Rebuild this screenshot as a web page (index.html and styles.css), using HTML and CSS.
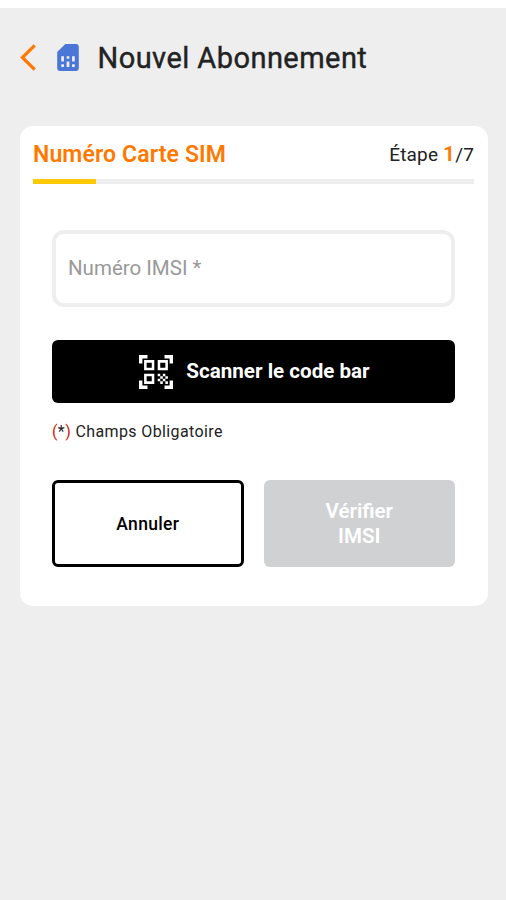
FILE: index.html
```html
<!DOCTYPE html>
<html lang="fr">
<head>
  <meta charset="UTF-8">
  <title>Nouvel Abonnement</title>
  <link rel="stylesheet" href="styles.css">
</head>
<body>
  <header class="topbar">
    <svg class="back" viewBox="0 0 16 28"><path d="M14.7 1.3 2.4 13.5l12.3 12.2"/></svg>
    <svg class="sim" viewBox="4 2 16 20"><path d="M20 4c0-1.1-.9-2-2-2h-8L4 8v12c0 1.1.9 2 2 2h12c1.1 0 2-.9 2-2V4zM9 19H7v-2h2v2zm8 0h-2v-2h2v2zm-8-4H7v-4h2v4zm4 4h-2v-4h2v4zm0-6h-2v-2h2v2zm4 2h-2v-4h2v4z"/></svg>
    <h1>Nouvel Abonnement</h1>
  </header>

  <main class="card">
    <div class="card-head">
      <h2>Numéro Carte SIM</h2>
      <span class="step">Étape <b>1</b>/7</span>
    </div>
    <div class="progress"><div class="progress-bar"></div></div>

    <form class="form">
      <input type="text" placeholder="Numéro IMSI *">
      <button type="button" class="btn btn-scan">
        <svg viewBox="2 2 20 20"><path d="M9.5 6.5v3h-3v-3h3M11 5H5v6h6V5zm-1.5 9.5v3h-3v-3h3M11 13H5v6h6v-6zm6.5-6.5v3h-3v-3h3M19 5h-6v6h6V5zm-6 8h1.5v1.5H13V13zm1.5 1.5H16V16h-1.5v-1.5zM16 13h1.5v1.5H16V13zm-3 3h1.5v1.5H13V16zm1.5 1.5H16V19h-1.5v-1.5zM16 16h1.5v1.5H16V16zm1.5-1.5H19V16h-1.5v-1.5zm0 3H19V19h-1.5v-1.5zM22 7h-2V4h-3V2h5v5zm0 15v-5h-2v3h-3v2h5zM2 22h5v-2H4v-3H2v5zM2 2v5h2V4h3V2H2z"/></svg>
        <span>Scanner le code bar</span>
      </button>
      <p class="note"><span class="paren">(</span>*<span class="paren">)</span> Champs Obligatoire</p>
      <div class="actions">
        <button type="button" class="btn btn-cancel">Annuler</button>
        <button type="button" class="btn btn-check" disabled>Vérifier<br>IMSI</button>
      </div>
    </form>
  </main>
</body>
</html>
```

FILE: styles.css
```css
* {
  box-sizing: border-box;
}
body {
  margin: 0;
  min-height: 900px;
  border-top: 8px solid #fff;
  background: #eeeeee;
  color: #222;
  font-family: Roboto, sans-serif;
}
h1, h2, p {
  margin: 0;
}
.topbar {
  display: flex;
  align-items: center;
  height: 99px;
  padding-left: 20px;
}
.back {
  width: 16px;
  height: 28px;
  fill: none;
  stroke: #ff7900;
  stroke-width: 3.2;
}
.sim {
  width: 22px;
  height: 27px;
  margin: 0 18.5px 0 21px;
  fill: #4a76d8;
}
h1 {
  font-size: 29px;
  font-weight: 400;
  -webkit-text-stroke: 0.4px #222;
  letter-spacing: 0.45px;
}
.card {
  height: 480px;
  margin: 19px 18px 0 20px;
  padding: 13px 14px 0 13px;
  border-radius: 13px;
  background: #fff;
}
.card-head {
  display: flex;
  justify-content: space-between;
  align-items: center;
  height: 29px;
}
h2 {
  padding-top: 1px;
  color: #ff7900;
  font-size: 23px;
  font-weight: 600;
  letter-spacing: 0.13px;
}
.step {
  font-size: 19px;
  letter-spacing: 0.15px;
}
.step b {
  color: #ff7900;
  font-size: 21px;
  font-weight: 600;
}
.progress {
  height: 5px;
  margin-top: 11px;
  background: #eeeeee;
}
.progress-bar {
  width: 14.3%;
  height: 100%;
  background: #fbc908;
}
.form {
  padding: 46px 19px 0;
}
input {
  display: block;
  width: 100%;
  height: 77px;
  padding: 0 12px 2px;
  border: 4px solid #eeeeee;
  border-radius: 12px;
  font-family: inherit;
  font-size: 20.5px;
  outline: none;
}
input::placeholder {
  color: #999;
}
.btn {
  border: 0;
  border-radius: 6px;
  font-family: inherit;
}
.btn-scan {
  display: flex;
  justify-content: center;
  align-items: center;
  gap: 13px;
  width: 100%;
  height: 63px;
  margin-top: 33px;
  padding: 0 5px 0 7px;
  background: #000;
  color: #fff;
  font-size: 20.6px;
  font-weight: 700;
}
.btn-scan span {
  padding-bottom: 2px;
}
.btn-scan svg {
  width: 34px;
  height: 34px;
  fill: #fff;
}
.note {
  margin-top: 19px;
  font-size: 16px;
  line-height: 20px;
  letter-spacing: 0.38px;
}
.paren {
  color: #d3180c;
}
.actions {
  display: grid;
  grid-template-columns: 1fr 1fr;
  gap: 20px;
  height: 87px;
  margin-top: 38px;
}
.btn-cancel {
  border: 3px solid #000;
  background: #fff;
  color: #000;
  font-size: 17.5px;
  font-weight: 500;
  letter-spacing: 0.3px;
}
.btn-check {
  background: #cfd1d2;
  color: #fff;
  font-size: 20.6px;
  font-weight: 600;
  line-height: 25px;
}
```
